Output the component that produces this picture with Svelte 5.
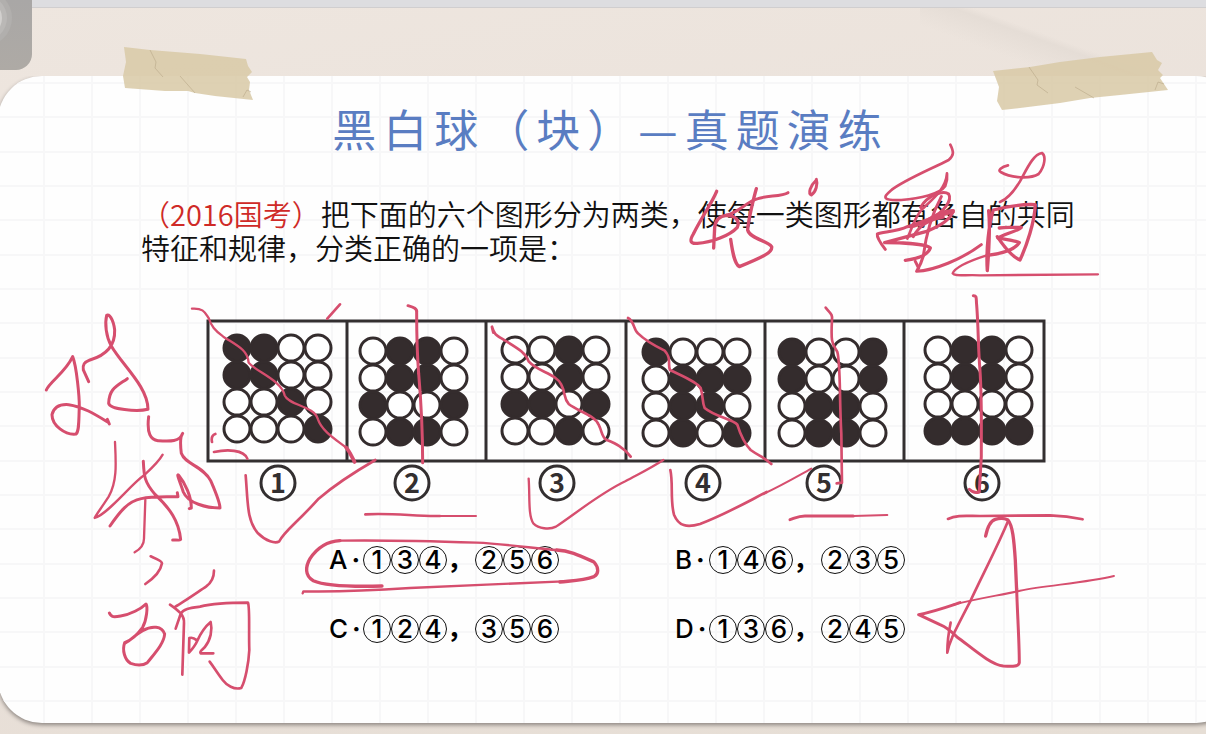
<script>
  const figures = [
    { x: 237, y: 348, label: 278, rows: ['1100', '1100', '0010', '0001'] },
    { x: 373, y: 351, label: 412, rows: ['0110', '0110', '1001', '0110'] },
    { x: 515, y: 350, label: 557, rows: ['0010', '0010', '1101', '0010'] },
    { x: 656, y: 352, label: 703, rows: ['1000', '0111', '0110', '0101'] },
    { x: 792, y: 352, label: 824, rows: ['1001', '1001', '0110', '0110'] },
    { x: 938, y: 350, label: 982, rows: ['0110', '0110', '0000', '1111'] }
  ];
  const dividers = [347, 486, 626, 765, 904];
  const options = [
    ['A', '134', '256'],
    ['B', '146', '235'],
    ['C', '124', '356'],
    ['D', '136', '245']
  ];
  const columns = Array.from({ length: 26 }, (_, i) => 45 + i * 48);
  const lines = Array.from({ length: 19 }, (_, i) => Math.round(6 + (i * 103) / 3));

  // Pen strokes, grouped by the area of the slide; units are thirds of a pixel.
  const ink = [
    {
      x: 680, y: 130,
      strokes: [
        [10, 'M110 184C94 222 66 260 40 312C28 332 30 342 52 340C96 338 150 316 172 292C180 274 168 256 140 256C118 258 106 270 104 292L101 354'],
        [10, 'M229 176C222 200 205 270 203 300C210 326 262 332 275 350C278 366 256 378 178 410C164 402 158 370 152 328'],
        [9, 'M138 256C180 246 200 214 234 206C260 196 306 200 324 188'],
        [9, 'M409 148C414 162 408 186 394 195C384 190 390 168 409 150'],
        [8, 'M811 44C822 66 822 76 806 90C756 116 668 152 632 182C606 204 610 212 664 210C720 206 780 192 796 168C804 150 802 140 801 130C798 176 760 206 726 238C702 264 694 300 682 326'],
        [9, 'M722 232C742 196 790 180 806 192C818 212 790 246 752 266C728 280 704 290 690 290'],
        [10, 'M744 270C770 252 806 240 820 242C812 270 776 290 740 304L614 338C664 338 740 342 751 354C744 374 716 386 676 391'],
        [9, 'M682 290C654 304 610 306 592 312C590 324 602 340 616 358M684 290L760 262L820 246'],
        [9, 'M784 200C752 260 736 330 730 378C724 400 716 414 710 424C760 422 846 388 904 344'],
        [9, 'M700 320C716 290 746 268 790 262M706 394L716 414'],
        [8, 'M984 106C964 110 952 122 962 126C992 144 1050 148 1076 132C1096 108 1098 76 1086 69C1060 72 1040 118 1020 154C1002 184 984 206 960 216'],
        [10, 'M926 242C932 300 926 370 922 422C918 360 926 286 940 240C980 230 1030 222 1066 224C1064 276 1040 348 1020 390C996 380 968 344 952 320'],
        [10, 'M958 294C984 290 1012 294 1024 292C1014 304 970 312 954 324C984 330 1010 332 1018 338C1004 360 960 372 922 376'],
        [7, 'M920 376C870 392 826 410 818 430C824 440 850 434 900 436L1254 433']
      ]
    },
    {
      x: 30, y: 290,
      strokes: [
        [9, 'M49 300C58 276 106 248 128 200C140 230 148 320 148 350C146 390 148 424 138 432C106 436 66 406 66 374C72 350 90 342 116 344C160 350 200 376 236 398M232 388L238 402'],
        [9, 'M176 275L160 240C158 222 162 218 180 210C220 198 256 172 254 120C250 86 236 70 230 76C224 100 228 140 244 168C274 222 354 290 354 358C320 366 240 358 236 340C238 296 258 290 292 266'],
        [9, 'M356 380C350 430 362 450 384 452C420 454 450 456 458 430C450 440 452 474 454 490C466 524 520 528 542 572C554 600 570 636 570 654C530 654 474 640 460 606C450 576 438 548 446 556C466 580 484 620 484 654L478 656'],
        [7, 'M255 456C258 520 262 574 236 620C214 654 196 678 194 684C232 674 302 584 342 556C368 532 386 516 398 494'],
        [9, 'M240 708C270 664 294 634 334 626C370 618 414 622 444 620L442 608M340 514C342 556 342 576 376 614C420 656 446 692 452 748C450 752 440 750 428 750'],
        [7, 'M346 630L342 746C342 768 326 780 314 787'],
        [7, 'M486 56C520 54 524 66 536 84C544 108 554 122 580 140C620 166 654 180 656 218C676 244 754 270 764 316C776 346 854 348 864 388C876 424 920 450 950 474'],
        [11, 'M948 472C960 486 966 502 974 516'],
        [8, 'M892 86L930 43M556 432C544 436 544 446 546 456M552 486C590 478 642 478 652 506'],
        [8, 'M647 556C654 636 650 692 684 730C708 754 736 762 748 754C762 724 802 698 866 626C920 580 974 546 1036 510']
      ]
    },
    {
      x: 340, y: 290,
      strokes: [
        [9, 'M204 47C222 52 232 56 230 68C230 120 232 200 236 250'],
        [9, 'M236 250C242 320 248 400 248 518'],
        [8, 'M76 673C160 668 230 680 300 678'],
        [6, 'M290 678L408 678'],
        [8, 'M456 110C462 132 468 136 486 146C530 174 556 186 566 214C594 246 648 250 664 284C678 312 670 324 686 342C714 364 764 376 776 404C788 428 784 440 800 450C824 460 850 470 872 500M456 112L460 128'],
        [7, 'M566 566C570 620 564 676 580 700C596 716 628 720 648 710C700 676 780 610 856 574C900 550 930 536 970 510']
      ]
    },
    {
      x: 620, y: 290,
      strokes: [
        [8, 'M24 84C44 94 40 120 54 130C78 154 106 168 134 182C156 206 142 220 150 240C182 256 230 274 242 294C250 320 246 336 254 354C284 380 340 388 352 404C362 436 374 462 392 480C420 500 436 504 454 522'],
        [8, 'M617 53C632 72 638 72 636 90C632 164 638 160 652 186C662 220 658 330 664 430L666 578L650 580'],
        [9, 'M1060 17C1072 16 1068 28 1070 44C1076 120 1074 170 1080 240C1086 330 1084 400 1084 500L1078 606C1066 610 1056 606 1048 598'],
        [8, 'M151 540C160 580 150 630 162 674C176 708 200 714 240 702C310 676 370 642 440 606'],
        [6, 'M430 612C490 584 530 560 574 536'],
        [9, 'M510 689C530 682 540 676 560 678L700 678'],
        [6, 'M700 678L802 675'],
        [8, 'M984 687C1010 674 1040 678 1080 678L1290 676C1340 678 1360 682 1388 688']
      ]
    },
    {
      x: 30, y: 490,
      strokes: [
        [8, 'M362 199C378 206 396 212 396 220C392 244 370 266 346 282'],
        [9, 'M238 369C244 382 252 382 272 378C300 374 334 356 348 342C354 350 350 390 338 412C322 434 300 452 284 458C276 480 284 510 302 520C324 528 340 526 352 518C376 488 402 460 404 432C396 408 366 406 338 422C316 434 304 450 284 460'],
        [8, 'M552 242C552 266 544 278 528 290C498 310 458 338 436 350M420 344C446 362 464 376 462 400L457 554M437 416L452 372C460 356 480 354 510 350C550 340 610 338 654 338C660 352 656 420 658 480C656 520 646 572 634 594C612 600 590 586 578 570C562 550 552 532 539 515'],
        [8, 'M478 444L477 488C486 478 496 466 502 452C492 444 486 442 480 444M502 452C512 430 530 406 542 396C548 420 542 450 524 472C514 482 508 484 512 490L550 490']
      ]
    },
    {
      x: 290, y: 500,
      strokes: [
        [10, 'M276 258C200 260 110 260 70 242C44 228 46 200 60 176C80 146 110 124 150 122'],
        [7, 'M148 122C280 120 440 124 560 128C650 132 740 146 800 150'],
        [10, 'M800 150C840 152 868 166 912 186C928 204 926 222 912 230C880 242 850 242 810 246'],
        [7, 'M820 244C700 250 480 258 360 264C240 272 140 276 40 274L38 280']
      ]
    },
    {
      x: 660, y: 500,
      strokes: [
        [10, 'M977 108C982 84 992 62 1006 58C1020 54 1032 54 1044 60C1058 76 1062 120 1066 180L1070 270'],
        [8, 'M1044 64C1010 146 960 240 930 306C906 352 880 402 876 414C868 432 864 446 862 458C862 430 866 396 872 368'],
        [9, 'M1070 264C1072 340 1078 420 1078 488C1076 500 1060 500 1030 498C990 494 930 438 890 410C874 394 860 382 840 374L776 344C820 336 870 318 900 308'],
        [6, 'M880 314C960 294 1030 284 1080 272C1160 256 1280 248 1362 228']
      ]
    }
  ];
</script>

<div class="page">
  <div class="statusbar"></div>
  <main class="card">
    <svg class="paper" aria-hidden="true">
      {#each columns as x}<rect {x} y="0" width="2" height="100%" />{/each}
      {#each lines as y}<rect x="0" {y} width="100%" height="2" />{/each}
    </svg>
    <div class="content">
      <h1>黑白球（块）—真题演练</h1>
      <p class="question">
        <span class="source">（2016国考）</span>把下面的六个图形分为两类，使每一类图形都有各自的共同<br />特征和规律，分类正确的一项是：
      </p>
      <svg class="figures" viewBox="206 319 840 184" role="img" aria-label="①②③④⑤⑥">
        <g fill="none" stroke="#332f30" stroke-width="3">
          <rect x="208" y="321" width="836" height="140" />
          {#each dividers as x}<path d="M{x} 321V461" />{/each}
        </g>
        {#each figures as f, n}
          <g stroke="#342c2d" stroke-width="3">
            {#each f.rows as row, r}
              {#each row.split('') as dot, c}
                <circle cx={f.x + c * 27} cy={f.y + r * 27} r="13" fill={dot === '1' ? '#342c2d' : '#fff'} />
              {/each}
            {/each}
          </g>
          <circle cx={f.label} cy="483" r="17" fill="#fff" stroke="#332f30" stroke-width="3" />
          <text x={f.label} y="493" text-anchor="middle">{n + 1}</text>
        {/each}
      </svg>
      <ul class="options">
        {#each options as [letter, first, second]}
          <li>
            <span class="lead">{letter}<b>·</b></span>
            {#each first.split('') as d}<span class="ring">{d}</span>{/each}
            <span class="comma">，</span>
            {#each second.split('') as d}<span class="ring">{d}</span>{/each}
          </li>
        {/each}
      </ul>
    </div>
  </main>

  <svg class="overlay" width="1206" height="734" viewBox="0 0 1206 734" aria-hidden="true">
    <g fill="#d8c9a7" fill-opacity=".86">
      <path d="M124 47L150 50L200 54L246 59L248 66L252 72L247 77L250 82L249 90L253 100L215 96L195 93L188 91L165 91L125 88L123 76L126 62Z" />
      <path d="M993 71L1030 67L1060 62L1100 57L1152 52L1157 60L1162 63L1158 70L1163 75L1160 78L1168 90L1120 95L1090 98L1060 103L1020 108L1002 110L997 101L999 87Z" />
    </g>
    <g fill="none" stroke="#b9a988" stroke-opacity=".6">
      <path d="M150 50L156 62L155 68L163 77M180 76L195 93M243 97L247 90L251 92" />
      <path d="M1029 67L1038 80L1037 85L1048 93M1075 87L1094 98M1155 90L1158 82L1164 84" />
    </g>
    {#each ink as group}
      <g transform="translate({group.x} {group.y}) scale(.3333)" fill="none" stroke="#d64e6e" stroke-linecap="round" stroke-linejoin="round">
        {#each group.strokes as [width, d]}<path {d} stroke-width={width} />{/each}
      </g>
    {/each}
  </svg>

  <div class="assist"><i></i></div>
</div>

<style>
  :global(body) { margin: 0; }
  .page {
    position: relative;
    min-height: 100vh;
    overflow: hidden;
    background:
      linear-gradient(200deg, transparent 0 46%, #e5ddd6 50%, transparent 66%) 920px 8px / 286px 80px no-repeat,
      linear-gradient(170deg, #eee6df, #e9e0d9 60%, #e6ded5);
    font-family: "Noto Sans CJK SC", sans-serif;
    color: #111;
  }
  .statusbar {
    height: 8px;
    box-sizing: border-box;
    background: #dddde0;
    border-bottom: 1px solid #d0cecf;
  }
  .card {
    position: relative;
    margin: 68px -34px 11px -2px;
    border-radius: 44px;
    background: #fefefe;
    box-shadow: 0 2px 4px #8c8580;
    clip-path: inset(0 0 -10px 0);
  }
  .paper {
    position: absolute;
    inset: 0;
    width: 100%;
    height: 100%;
    border-radius: 44px;
    fill: #f7f7f8;
  }
  .content {
    position: relative;
    padding: 20px 174px 60px 143px;
  }
  h1 {
    margin: 0 0 36px;
    padding-left: 14px;
    text-align: center;
    white-space: nowrap;
    font-size: 44px;
    line-height: 64px;
    font-weight: 400;
    letter-spacing: 7px;
    color: #5a7dc2;
  }
  .question {
    margin: 0;
    font-size: 29px;
    line-height: 34px;
    font-weight: 350;
    white-space: nowrap;
  }
  .source { color: #cf2a27; }
  .figures {
    display: block;
    width: 100%;
    max-width: 840px;
    margin: 55px 0 0 65px;
  }
  text {
    font: bold 27px "Noto Sans CJK SC", sans-serif;
    fill: #332f30;
  }
  .options {
    display: grid;
    grid-template-columns: 346px 1fr;
    margin: 22px 0 0 188px;
    padding: 0;
    list-style: none;
    font: 500 26px/28px Inter, "Noto Sans CJK SC", sans-serif;
    color: #000;
    white-space: nowrap;
  }
  .options li {
    display: flex;
    align-items: center;
    height: 69px;
  }
  .lead {
    width: 34px;
  }
  .lead b {
    margin-left: 4px;
    font-weight: 700;
  }
  .ring {
    box-sizing: border-box;
    width: 28px;
    height: 28px;
    border: 1px solid #111;
    border-radius: 50%;
    text-align: center;
    line-height: 26px;
  }
  .comma {
    width: 28px;
    font-weight: 700;
  }
  .overlay {
    position: absolute;
    top: 0;
    left: 0;
  }
  .assist {
    position: absolute;
    top: 0;
    left: 0;
    width: 32px;
    height: 70px;
    overflow: hidden;
    border-radius: 0 0 16px 0;
    background: linear-gradient(#a9a7a6, #aeaaa5);
  }
  .assist i {
    position: absolute;
    left: -34px;
    top: 0;
    width: 36px;
    height: 36px;
    border-radius: 50%;
    background: #d2d0ce;
    box-shadow: 0 0 0 5px #bab8b6, 0 0 0 10px #b1afad;
  }
</style>
